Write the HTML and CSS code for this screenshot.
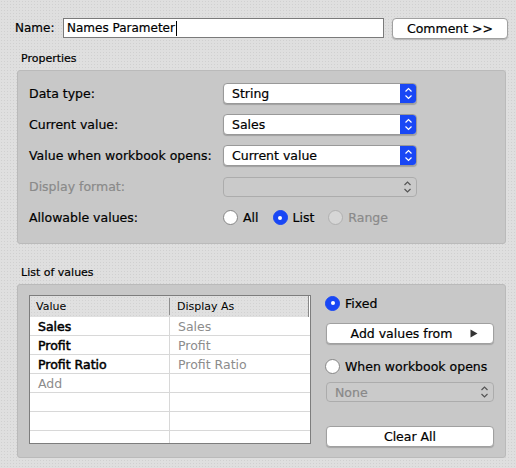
FILE: index.html
```html
<!DOCTYPE html>
<html>
<head>
<meta charset="utf-8">
<link rel="stylesheet" href="styles.css">
</head>
<body>
<div class="dialog">
  <div class="top">
    <span class="name-label">Name:</span>
    <div class="input"><span>Names Parameter</span><span class="caret"></span></div>
    <div class="btn comment">Comment &gt;&gt;</div>
  </div>

  <div class="section-label">Properties</div>
  <div class="panel props">
    <div class="prow">
      <span class="lbl">Data type:</span>
      <div class="select"><span class="sel-text">String</span><span class="stepper"><svg width="17" height="21" viewBox="0 0 17 21"><path d="M5.5 8.5 L8.5 5.5 L11.5 8.5 M5.5 12.5 L8.5 15.5 L11.5 12.5" fill="none" stroke="#fff" stroke-width="1.2"/></svg></span></div>
    </div>
    <div class="prow">
      <span class="lbl">Current value:</span>
      <div class="select"><span class="sel-text">Sales</span><span class="stepper"><svg width="17" height="21" viewBox="0 0 17 21"><path d="M5.5 8.5 L8.5 5.5 L11.5 8.5 M5.5 12.5 L8.5 15.5 L11.5 12.5" fill="none" stroke="#fff" stroke-width="1.2"/></svg></span></div>
    </div>
    <div class="prow">
      <span class="lbl">Value when workbook opens:</span>
      <div class="select"><span class="sel-text">Current value</span><span class="stepper"><svg width="17" height="21" viewBox="0 0 17 21"><path d="M5.5 8.5 L8.5 5.5 L11.5 8.5 M5.5 12.5 L8.5 15.5 L11.5 12.5" fill="none" stroke="#fff" stroke-width="1.2"/></svg></span></div>
    </div>
    <div class="prow">
      <span class="lbl disabled">Display format:</span>
      <div class="select off"><span class="sel-text"></span><span class="stepper-off"><svg width="17" height="20" viewBox="0 0 17 20"><path d="M5.5 8 L8.5 5 L11.5 8 M5.5 12 L8.5 15 L11.5 12" fill="none" stroke="#555" stroke-width="1.2"/></svg></span></div>
    </div>
    <div class="prow">
      <span class="lbl">Allowable values:</span>
      <div class="radios">
        <span class="ropt"><span class="radio"></span>All</span>
        <span class="ropt"><span class="radio on"></span>List</span>
        <span class="ropt disabled"><span class="radio dis"></span>Range</span>
      </div>
    </div>
  </div>

  <div class="section-label list-label">List of values</div>
  <div class="panel list">
    <div class="table">
      <div class="thead">
        <span class="th c1">Value</span>
        <span class="th c2">Display As</span>
      </div>
      <div class="tr"><span class="td c1 val">Sales</span><span class="td c2 disp">Sales</span></div>
      <div class="tr"><span class="td c1 val">Profit</span><span class="td c2 disp">Profit</span></div>
      <div class="tr"><span class="td c1 val">Profit Ratio</span><span class="td c2 disp">Profit Ratio</span></div>
      <div class="tr"><span class="td c1 add">Add</span><span class="td c2"></span></div>
      <div class="tr"><span class="td c1"></span><span class="td c2"></span></div>
      <div class="tr"><span class="td c1"></span><span class="td c2"></span></div>
      <div class="tr last"><span class="td c1"></span><span class="td c2"></span></div>
    </div>
    <div class="side">
      <div class="ropt fixed"><span class="radio on"></span>Fixed</div>
      <div class="btn wide addfrom"><span>Add values from</span><svg class="tri" width="8" height="9" viewBox="0 0 8 9"><path d="M0.5 0.5 L7.5 4.5 L0.5 8.5 Z" fill="#333"/></svg></div>
      <div class="ropt when"><span class="radio"></span>When workbook opens</div>
      <div class="select off none"><span class="sel-text">None</span><span class="stepper-off"><svg width="17" height="20" viewBox="0 0 17 20"><path d="M5.5 8 L8.5 5 L11.5 8 M5.5 12 L8.5 15 L11.5 12" fill="none" stroke="#555" stroke-width="1.2"/></svg></span></div>
      <div class="btn wide clear">Clear All</div>
    </div>
  </div>
</div>
</body>
</html>
```

FILE: styles.css
```css
html, body {
  margin: 0;
  padding: 0;
}
body {
  width: 516px;
  height: 468px;
  overflow: hidden;
  background-color: #dfdfdf;
  background-image: radial-gradient(circle, #d0d0d0 0.6px, transparent 0.9px);
  background-size: 3px 3px;
  font-family: "DejaVu Sans", "Liberation Sans", sans-serif;
  font-size: 12.5px;
  color: #000;
  -webkit-text-stroke: 0.2px;
}
.dialog {
  padding-top: 18px;
}
.top {
  display: flex;
  align-items: center;
  height: 20px;
  padding-left: 15px;
}
.name-label {
  width: 48px;
  font-size: 12px;
}
.input {
  width: 321px;
  height: 20px;
  box-sizing: border-box;
  border: 1px solid #7a7a7a;
  background: #fff;
  padding-left: 3px;
  display: flex;
  align-items: center;
  font-size: 12px;
}
.caret {
  display: inline-block;
  width: 1px;
  height: 15px;
  background: #000;
  margin-left: 1px;
}
.btn {
  box-sizing: border-box;
  height: 21px;
  border-radius: 4px;
  border: 1px solid #a0a0a0;
  background: #fff;
  box-shadow: 0 1px 1px rgba(0, 0, 0, 0.18);
  display: flex;
  align-items: center;
  justify-content: center;
  font-size: 12.5px;
}
.comment {
  margin-left: 8px;
  width: 116px;
}
.section-label {
  font-size: 11px;
  line-height: 14px;
  margin: 14px 0 4px 21px;
}
.list-label {
  margin-top: 22px;
  margin-bottom: 4px;
}
.panel {
  margin-left: 17px;
  width: 489px;
  box-sizing: border-box;
  background: #c8c8c8;
  border: 1px solid #bababa;
  border-radius: 3px;
}
.props {
  height: 174px;
  padding: 7px 0 0 11px;
}
.prow {
  display: flex;
  align-items: center;
  height: 31px;
}
.lbl {
  width: 194px;
}
.disabled {
  color: #8a8a8a;
}
.select {
  position: relative;
  box-sizing: border-box;
  width: 194px;
  height: 21px;
  border: 1px solid #999;
  border-radius: 4px;
  background: #fff;
  box-shadow: 0 1px 1px rgba(0, 0, 0, 0.2);
  display: flex;
  align-items: center;
  overflow: hidden;
}
.sel-text {
  flex: 1;
  padding-left: 8px;
  font-size: 12.5px;
}
.stepper {
  width: 17px;
  height: 21px;
  margin-right: -1px;
  background: #1947f5;
  display: flex;
}
.select.off {
  height: 20px;
  background-color: #d6d6d6;
  background-image: radial-gradient(circle, #c4c4c4 0.6px, transparent 0.9px);
  background-size: 2px 2px;
  border-color: #acacac;
  box-shadow: none;
}
.select.off .sel-text {
  color: #888;
}
.stepper-off {
  width: 17px;
  height: 20px;
  display: flex;
}
.radios {
  display: flex;
  align-items: center;
}
.ropt {
  display: flex;
  align-items: center;
  margin-right: 14px;
  font-size: 12.5px;
}
.radio {
  box-sizing: border-box;
  width: 15px;
  height: 15px;
  border-radius: 50%;
  border: 1px solid #858585;
  background: #fff;
  margin-right: 5px;
  position: relative;
}
.radio.on {
  background: #1947f5;
  border-color: #1947f5;
}
.radio.on::after {
  content: "";
  position: absolute;
  left: 4.5px;
  top: 4.5px;
  width: 4px;
  height: 4px;
  border-radius: 50%;
  background: #fff;
}
.radio.dis {
  background: #d6d6d6;
  border-color: #b0b0b0;
}
.ropt.disabled {
  color: #8a8a8a;
}
.list {
  height: 174px;
  display: flex;
  padding: 10px 0 0 11px;
}
.table {
  width: 282px;
  height: 149px;
  box-sizing: border-box;
  border: 1px solid #7d7d7d;
  background: #fff;
  display: flex;
  flex-direction: column;
}
.thead {
  display: flex;
  height: 21px;
  background-color: #e0e0e0;
  background-image: radial-gradient(circle, #d2d2d2 0.6px, transparent 0.9px);
  background-size: 3px 3px;
  border-right: 1px solid #888;
  margin-right: 1px;
  -webkit-text-stroke: 0;
}
.th {
  font-size: 11px;
  display: flex;
  align-items: center;
}
.th.c1 {
  width: 139px;
  padding-left: 6px;
  box-sizing: border-box;
}
.th.c2 {
  flex: 1;
  padding-left: 7px;
  border-left: 1px solid #8e8e8e;
  margin: 2px 0;
}
.tr {
  display: flex;
  height: 19px;
  box-sizing: border-box;
  border-bottom: 1px solid #d8d8d8;
}
.tr.last {
  flex: 1;
  border-bottom: none;
}
.td {
  display: flex;
  align-items: center;
  font-size: 12.5px;
}
.td.c1 {
  width: 139px;
  box-sizing: border-box;
  padding-left: 8px;
}
.td.c2 {
  flex: 1;
  padding-left: 8px;
  border-left: 1px solid #d8d8d8;
}
.val {
  -webkit-text-stroke: 0.5px;
}
.disp, .add {
  color: #8c8c8c;
  -webkit-text-stroke: 0;
}
.side {
  margin-left: 14px;
  width: 169px;
  display: flex;
  flex-direction: column;
}
.fixed {
  height: 16px;
  margin-right: 0;
}
.wide {
  margin-left: 1px;
  width: 168px;
  height: 21px;
}
.addfrom {
  margin-top: 12px;
  position: relative;
  padding-right: 17px;
}
.addfrom .tri {
  position: absolute;
  right: 15px;
  top: 5px;
}
.when {
  margin-top: 14px;
  height: 16px;
  margin-right: 0;
}
.none {
  margin-top: 8px;
  margin-left: 1px;
  width: 168px;
}
.clear {
  margin-top: 24px;
}
```
